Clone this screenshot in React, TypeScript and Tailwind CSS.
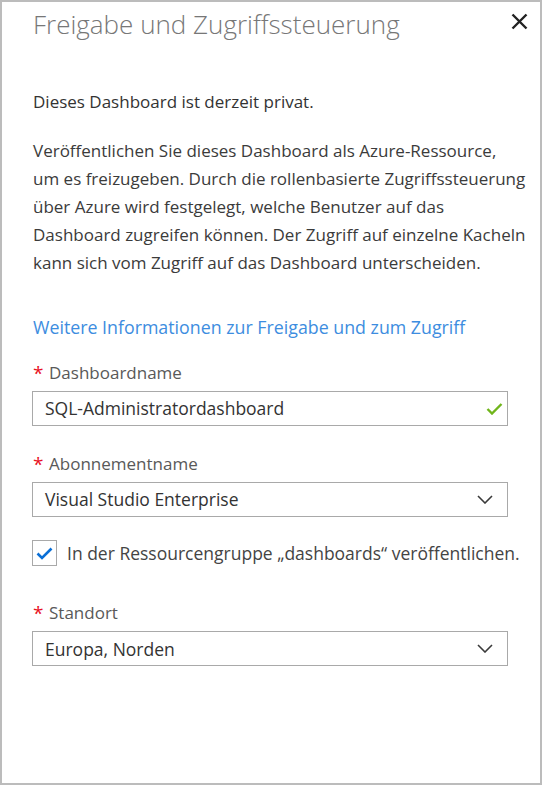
const font = { fontFamily: '"Open Sans", "Noto Sans", sans-serif' };

function Label({ text }: { text: string }) {
  return (
    <div className="flex items-start text-[17px] text-[#595959] leading-6 mb-[6px]">
      <span className="w-[17px] pl-[1px] text-[#e81123] text-[19px] leading-none mt-[3px]">*</span>
      <span>{text}</span>
    </div>
  );
}

function Chevron() {
  return (
    <svg width="16" height="9" viewBox="0 0 16 9" fill="none" className="text-[#3a3a3a]">
      <path d="M1 1l7 7 7-7" stroke="currentColor" strokeWidth="1.6" />
    </svg>
  );
}

function SelectBox({ value }: { value: string }) {
  return (
    <div className="h-[35px] w-[476px] border border-[#a9a9a9] flex items-center justify-between pl-[12px] pr-[14px] text-[17.5px] text-[#333]">
      <span>{value}</span>
      <Chevron />
    </div>
  );
}

export default function App() {
  return (
    <div style={font} className="w-[542px] h-[785px] bg-white border-2 border-[#bcbcbc] flex flex-col">
      {/* Kopfzeile */}
      <div className="flex items-start justify-between pl-[31px] pr-[12px] pt-[4px]">
        <h1 className="text-[26px] font-light text-[#777] leading-9">
          Freigabe und Zugriffssteuerung
        </h1>
        <svg width="17" height="17" viewBox="0 0 17 17" className="mt-[7px] text-[#222]">
          <path d="M1.5 1.5l14 14M15.5 1.5l-14 14" stroke="currentColor" strokeWidth="2.4" />
        </svg>
      </div>

      <div className="pl-[30px] pr-[10px] pt-[48px]">
        <p className="text-[17px] text-[#333] leading-6 pl-px">Dieses Dashboard ist derzeit privat.</p>
        <p className="text-[17px] text-[#3b3b3b] leading-[28px] mt-[23px] whitespace-nowrap pl-px">
          Veröffentlichen Sie dieses Dashboard als Azure-Ressource,
          <br />
          um es freizugeben. Durch die rollenbasierte Zugriffssteuerung
          <br />
          über Azure wird festgelegt, welche Benutzer auf das
          <br />
          Dashboard zugreifen können. Der Zugriff auf einzelne Kacheln
          <br />
          kann sich vom Zugriff auf das Dashboard unterscheiden.
        </p>

        <a className="block text-[17.8px] text-[#3d8de0] leading-6 mt-[38px] pl-px">
          Weitere Informationen zur Freigabe und zum Zugriff
        </a>

        {/* Dashboardname */}
        <div className="mt-[22px]">
          <Label text="Dashboardname" />
          <div className="h-[35px] w-[476px] border border-[#a9a9a9] flex items-center justify-between pl-[12px] pr-[4px] text-[17.5px] text-[#333]">
            <span>SQL-Administratordashboard</span>
            <svg width="17" height="12" viewBox="0 0 17 12" fill="none">
              <path d="M1.5 6l4.5 4.5 9.5-9.5" stroke="#70b51b" strokeWidth="2.4" />
            </svg>
          </div>
        </div>

        {/* Abonnementname */}
        <div className="mt-[26px]">
          <Label text="Abonnementname" />
          <SelectBox value="Visual Studio Enterprise" />
        </div>

        <div className="flex items-center gap-[10px] mt-[23px]">
          <div className="w-[25px] h-[26px] border border-[#a9a9a9] flex items-center justify-center">
            <svg width="17" height="13" viewBox="0 0 17 13" fill="none">
              <path d="M1.5 6.5l4.5 4.5 9.5-9.5" stroke="#0a6fd6" strokeWidth="2.6" />
            </svg>
          </div>
          <span className="text-[17.5px] text-[#444]">
            In der Ressourcengruppe „dashboards“ veröffentlichen.
          </span>
        </div>

        {/* Standort */}
        <div className="mt-[35px]">
          <Label text="Standort" />
          <SelectBox value="Europa, Norden" />
        </div>
      </div>
    </div>
  );
}
